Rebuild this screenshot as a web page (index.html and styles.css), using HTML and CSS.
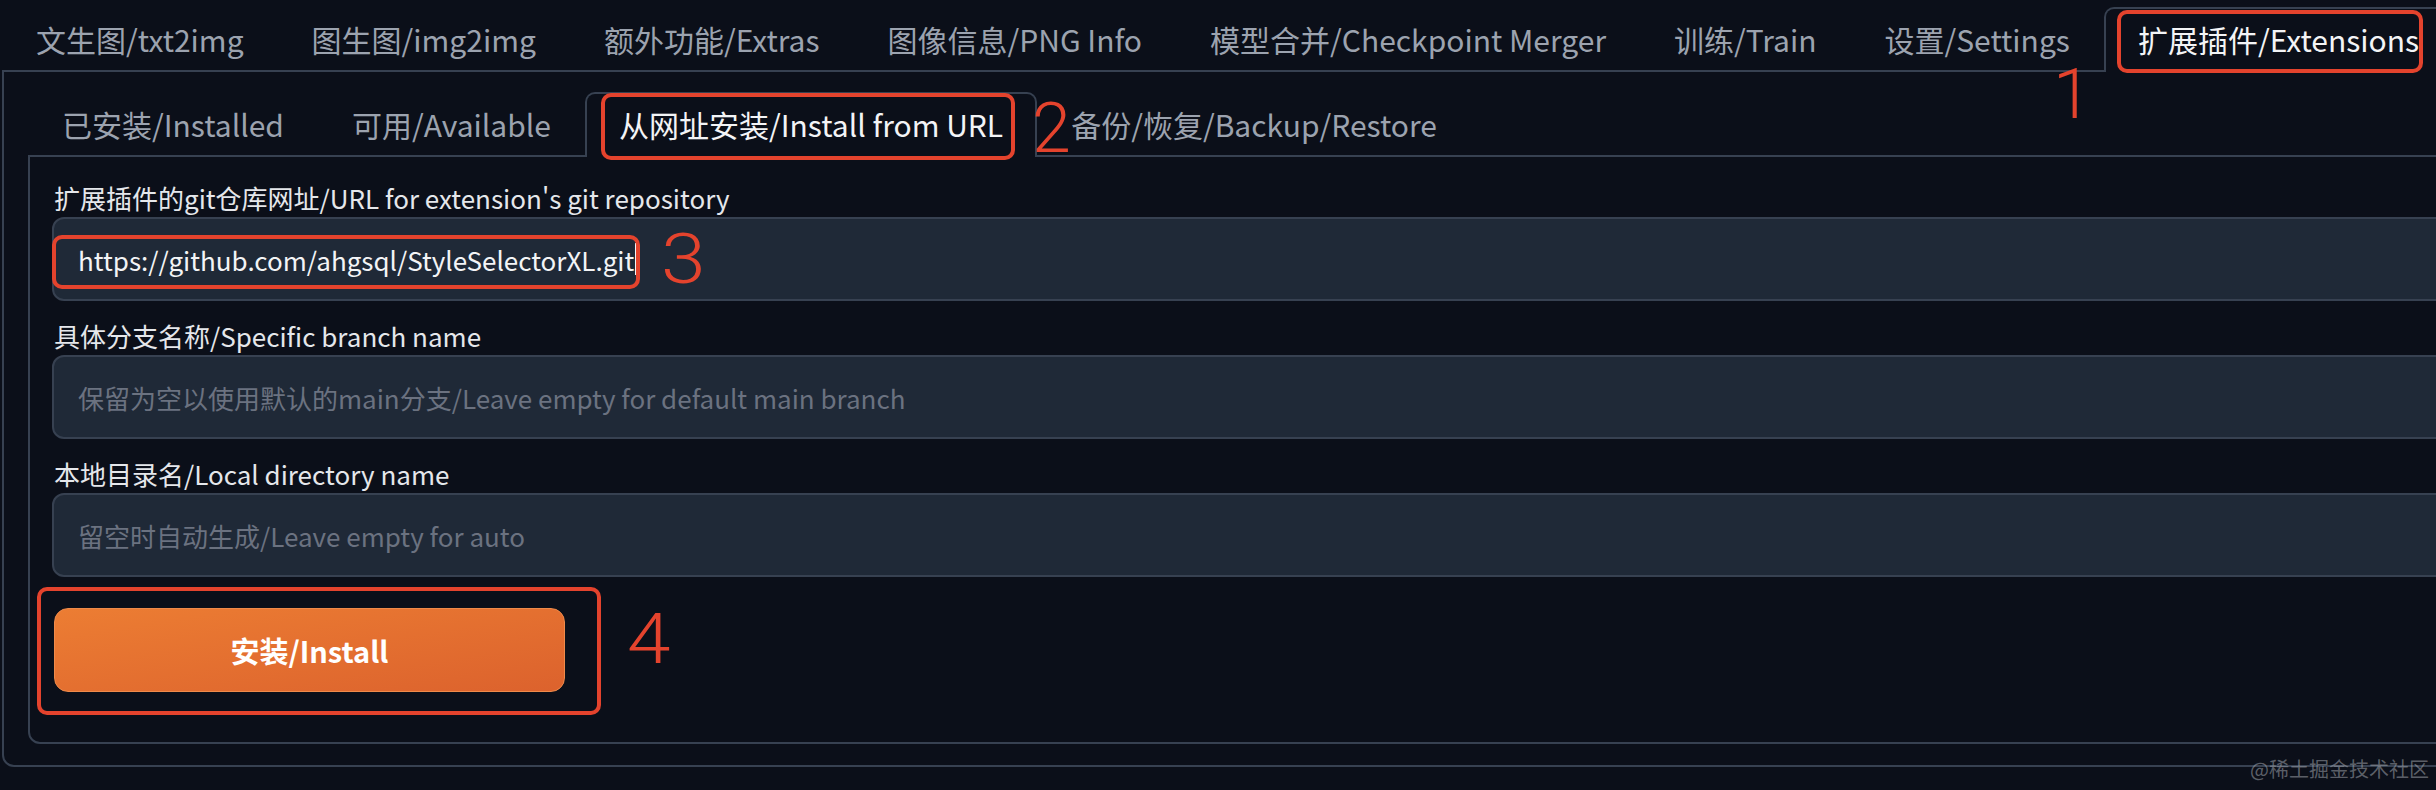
FILE: index.html
```html
<!DOCTYPE html>
<html lang="zh">
<head>
<meta charset="utf-8">
<title>Extensions</title>
<link rel="stylesheet" href="styles.css">
</head>
<body>
<div class="app">
  <div class="tabs">
    <nav class="tab-nav top-nav">
      <div class="tab">文生图/txt2img</div>
      <div class="tab">图生图/img2img</div>
      <div class="tab">额外功能/Extras</div>
      <div class="tab">图像信息/PNG Info</div>
      <div class="tab">模型合并/Checkpoint Merger</div>
      <div class="tab">训练/Train</div>
      <div class="tab">设置/Settings</div>
      <div class="tab active">扩展插件/Extensions<span class="mark mark-1"></span></div>
    </nav>
    <div class="panel outer">
      <nav class="tab-nav sub-nav">
        <div class="tab">已安装/Installed</div>
        <div class="tab">可用/Available</div>
        <div class="tab active">从网址安装/Install from URL<span class="mark mark-2"></span></div>
        <div class="tab">备份/恢复/Backup/Restore</div>
      </nav>
      <div class="panel inner">
        <div class="field">
          <div class="label">扩展插件的git仓库网址/URL for extension's git repository</div>
          <div class="input"><span class="value">https://github.com/ahgsql/StyleSelectorXL.git</span><span class="caret"></span><span class="mark mark-3"></span></div>
        </div>
        <div class="field">
          <div class="label">具体分支名称/Specific branch name</div>
          <div class="input"><span class="placeholder">保留为空以使用默认的main分支/Leave empty for default main branch</span></div>
        </div>
        <div class="field">
          <div class="label">本地目录名/Local directory name</div>
          <div class="input"><span class="placeholder">留空时自动生成/Leave empty for auto</span></div>
        </div>
        <div class="actions">
          <button class="primary">安装/Install<span class="mark mark-4"></span></button>
        </div>
      </div>
    </div>
  </div>
  <span class="num num-1">1</span>
  <span class="num num-2">2</span>
  <span class="num num-3">3</span>
  <span class="num num-4">4</span>
  <div class="watermark">@稀土掘金技术社区</div>
</div>
</body>
</html>
```

FILE: styles.css
```css
* { box-sizing: border-box; }

html, body {
  margin: 0;
  padding: 0;
  background: #0b0f19;
  overflow: hidden;
}

body {
  width: 2436px;
  height: 790px;
  font-family: "Noto Sans CJK SC", "Noto Sans", sans-serif;
  color: #e5e7eb;
}

.app {
  position: relative;
  width: 2436px;
  height: 790px;
  padding: 7px 0 0 2px;
}

.tabs {
  width: 2520px;
}

.tab-nav {
  display: flex;
  align-items: flex-end;
  height: 63px;
  position: relative;
  z-index: 2;
}

.tab {
  position: relative;
  height: 65px;
  margin-bottom: -2px;
  padding: 0 32px;
  border: 2px solid transparent;
  border-bottom: none;
  border-radius: 10px 10px 0 0;
  font-size: 30px;
  line-height: 61px;
  color: #9ca3af;
  white-space: nowrap;
}

.tab.active {
  border-color: #374151;
  background: #0b0f19;
  color: #f3f4f6;
}

.sub-nav .tab {
  padding: 0 32px;
}

.panel {
  border: 2px solid #374151;
  background: #0b0f19;
}

.outer {
  border-radius: 0 0 12px 12px;
  padding: 20px 0 21px 24px;
  height: 697px;
}

.inner {
  border-radius: 0 0 12px 12px;
  padding: 24px 0 50px 22px;
}

.field {
  margin-bottom: 18px;
}

.label {
  height: 36px;
  line-height: 34px;
  padding-left: 2px;
  font-size: 26px;
  color: #e5e7eb;
  white-space: nowrap;
}

.input {
  position: relative;
  height: 84px;
  display: flex;
  align-items: center;
  padding-left: 24px;
  background: #1f2937;
  border: 2px solid #374151;
  border-radius: 12px;
  font-size: 26px;
  white-space: nowrap;
}

.value { color: #f3f4f6; }

.caret {
  display: inline-block;
  width: 2px;
  height: 32px;
  margin-left: 1px;
  background: #f3f4f6;
}

.placeholder { color: #6b7280; }

.actions {
  padding-top: 13px;
  padding-left: 2px;
}

.primary {
  position: relative;
  display: block;
  width: 511px;
  height: 84px;
  border: 1px solid #ef8a4a;
  border-radius: 14px;
  background: linear-gradient(to bottom right, #ec7d33, #dc622d);
  color: #ffffff;
  font-family: "Noto Sans CJK SC", "Noto Sans", sans-serif;
  font-size: 29px;
  font-weight: 700;
  padding: 0;
}

.mark {
  position: absolute;
  border: 4px solid #e4432d;
  border-radius: 10px;
  pointer-events: none;
}

.mark-1 { left: 11px; top: 1px; width: 306px; height: 63px; }
.mark-2 { left: 14px; top: -1px; width: 414px; height: 67px; }
.mark-3 { left: -2px; top: 16px; width: 588px; height: 54px; }
.mark-4 { left: -18px; top: -22px; width: 564px; height: 128px; }

.num {
  position: absolute;
  z-index: 5;
  font-family: Roboto, "Liberation Sans", sans-serif;
  font-weight: 300;
  font-size: 70px;
  line-height: 70px;
  color: #e4432d;
}

.num-1 { left: 2053px; top: 59px; }
.num-2 { left: 1032px; top: 93px; }
.num-3 { left: 661px; top: 224px; transform: scaleX(1.15); transform-origin: left center; }
.num-4 { left: 627px; top: 604px; transform: scaleX(1.12); transform-origin: left center; }

.watermark {
  position: absolute;
  right: 7px;
  top: 755px;
  z-index: 5;
  font-size: 20px;
  line-height: 28px;
  color: rgba(160, 164, 172, 0.55);
  white-space: nowrap;
}
```
